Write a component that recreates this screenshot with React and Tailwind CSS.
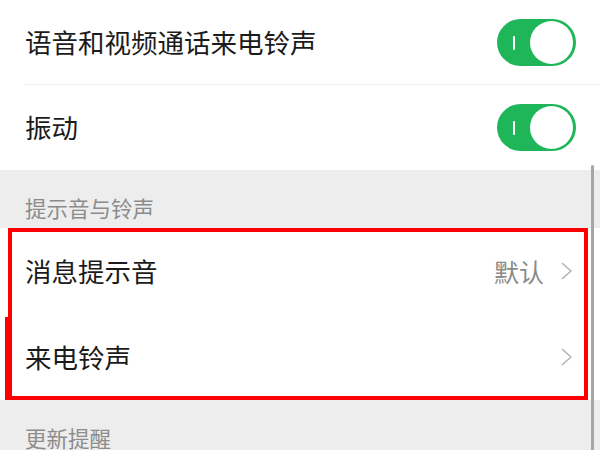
import React from "react";

function Toggle() {
  return (
    <div className="relative w-[79px] h-[47px] rounded-full bg-[#1fb65a]">
      <div className="absolute left-[16px] top-[17px] w-[2px] h-[14px] bg-white rounded-full" />
      <div className="absolute right-[3px] top-[2px] w-[43px] h-[43px] rounded-full bg-white" />
    </div>
  );
}

function Chevron() {
  return (
    <svg width="12" height="18" viewBox="0 0 12 18" fill="none">
      <path d="M1.5 1.5 L10 9 L1.5 16.5" stroke="#b3b3b3" strokeWidth="1.6" strokeLinecap="round" strokeLinejoin="round" />
    </svg>
  );
}

function SwitchRow({ label, height }) {
  return (
    <div className={`flex items-center pl-[25px] pr-[24px] ${height}`}>
      <span className="flex-1 text-[26.5px] leading-none text-[#1b1b1b]">{label}</span>
      <Toggle />
    </div>
  );
}

function LinkRow({ label, value }) {
  return (
    <div className="flex items-center h-[86px] pl-[25px] pr-[27px]">
      <span className="flex-1 text-[26.5px] leading-none text-[#1b1b1b]">{label}</span>
      {value && <span className="text-[25px] leading-none text-[#8a8a8a] mr-[17px]">{value}</span>}
      <Chevron />
    </div>
  );
}

function SectionHeader({ title }) {
  return (
    <div className="h-[58px] flex items-end pb-[10px] pl-[25px]">
      <span className="text-[21.5px] leading-none text-[#8c8c8c]">{title}</span>
    </div>
  );
}

export default function App() {
  return (
    <div
      className="relative w-[600px] h-[450px] overflow-hidden bg-[#ededed]"
      style={{ fontFamily: '"Noto Sans CJK SC", "Noto Sans", sans-serif' }}
    >
      <div className="bg-white">
        <SwitchRow label="语音和视频通话来电铃声" height="h-[84px]" />
        <div className="ml-[24px] h-px bg-[#f1f1f1]" />
        <SwitchRow label="振动" height="h-[85px]" />
      </div>

      <SectionHeader title="提示音与铃声" />

      <div className="bg-white">
        <LinkRow label="消息提示音" value="默认" />
        <LinkRow label="来电铃声" />
      </div>

      <SectionHeader title="更新提醒" />

      {/* red highlight box drawn over the screenshot */}
      <div className="absolute left-[8px] top-[228px] w-[580px] h-[172px] border-4 border-[#ff0000]" />
      <div className="absolute left-[5px] top-[317px] w-[4px] h-[83px] bg-[#ff0000]" />

      {/* scrollbar */}
      <div className="absolute left-[591px] top-[165px] w-[3px] h-[300px] rounded-full bg-[#a6a6a6]" />
    </div>
  );
}
